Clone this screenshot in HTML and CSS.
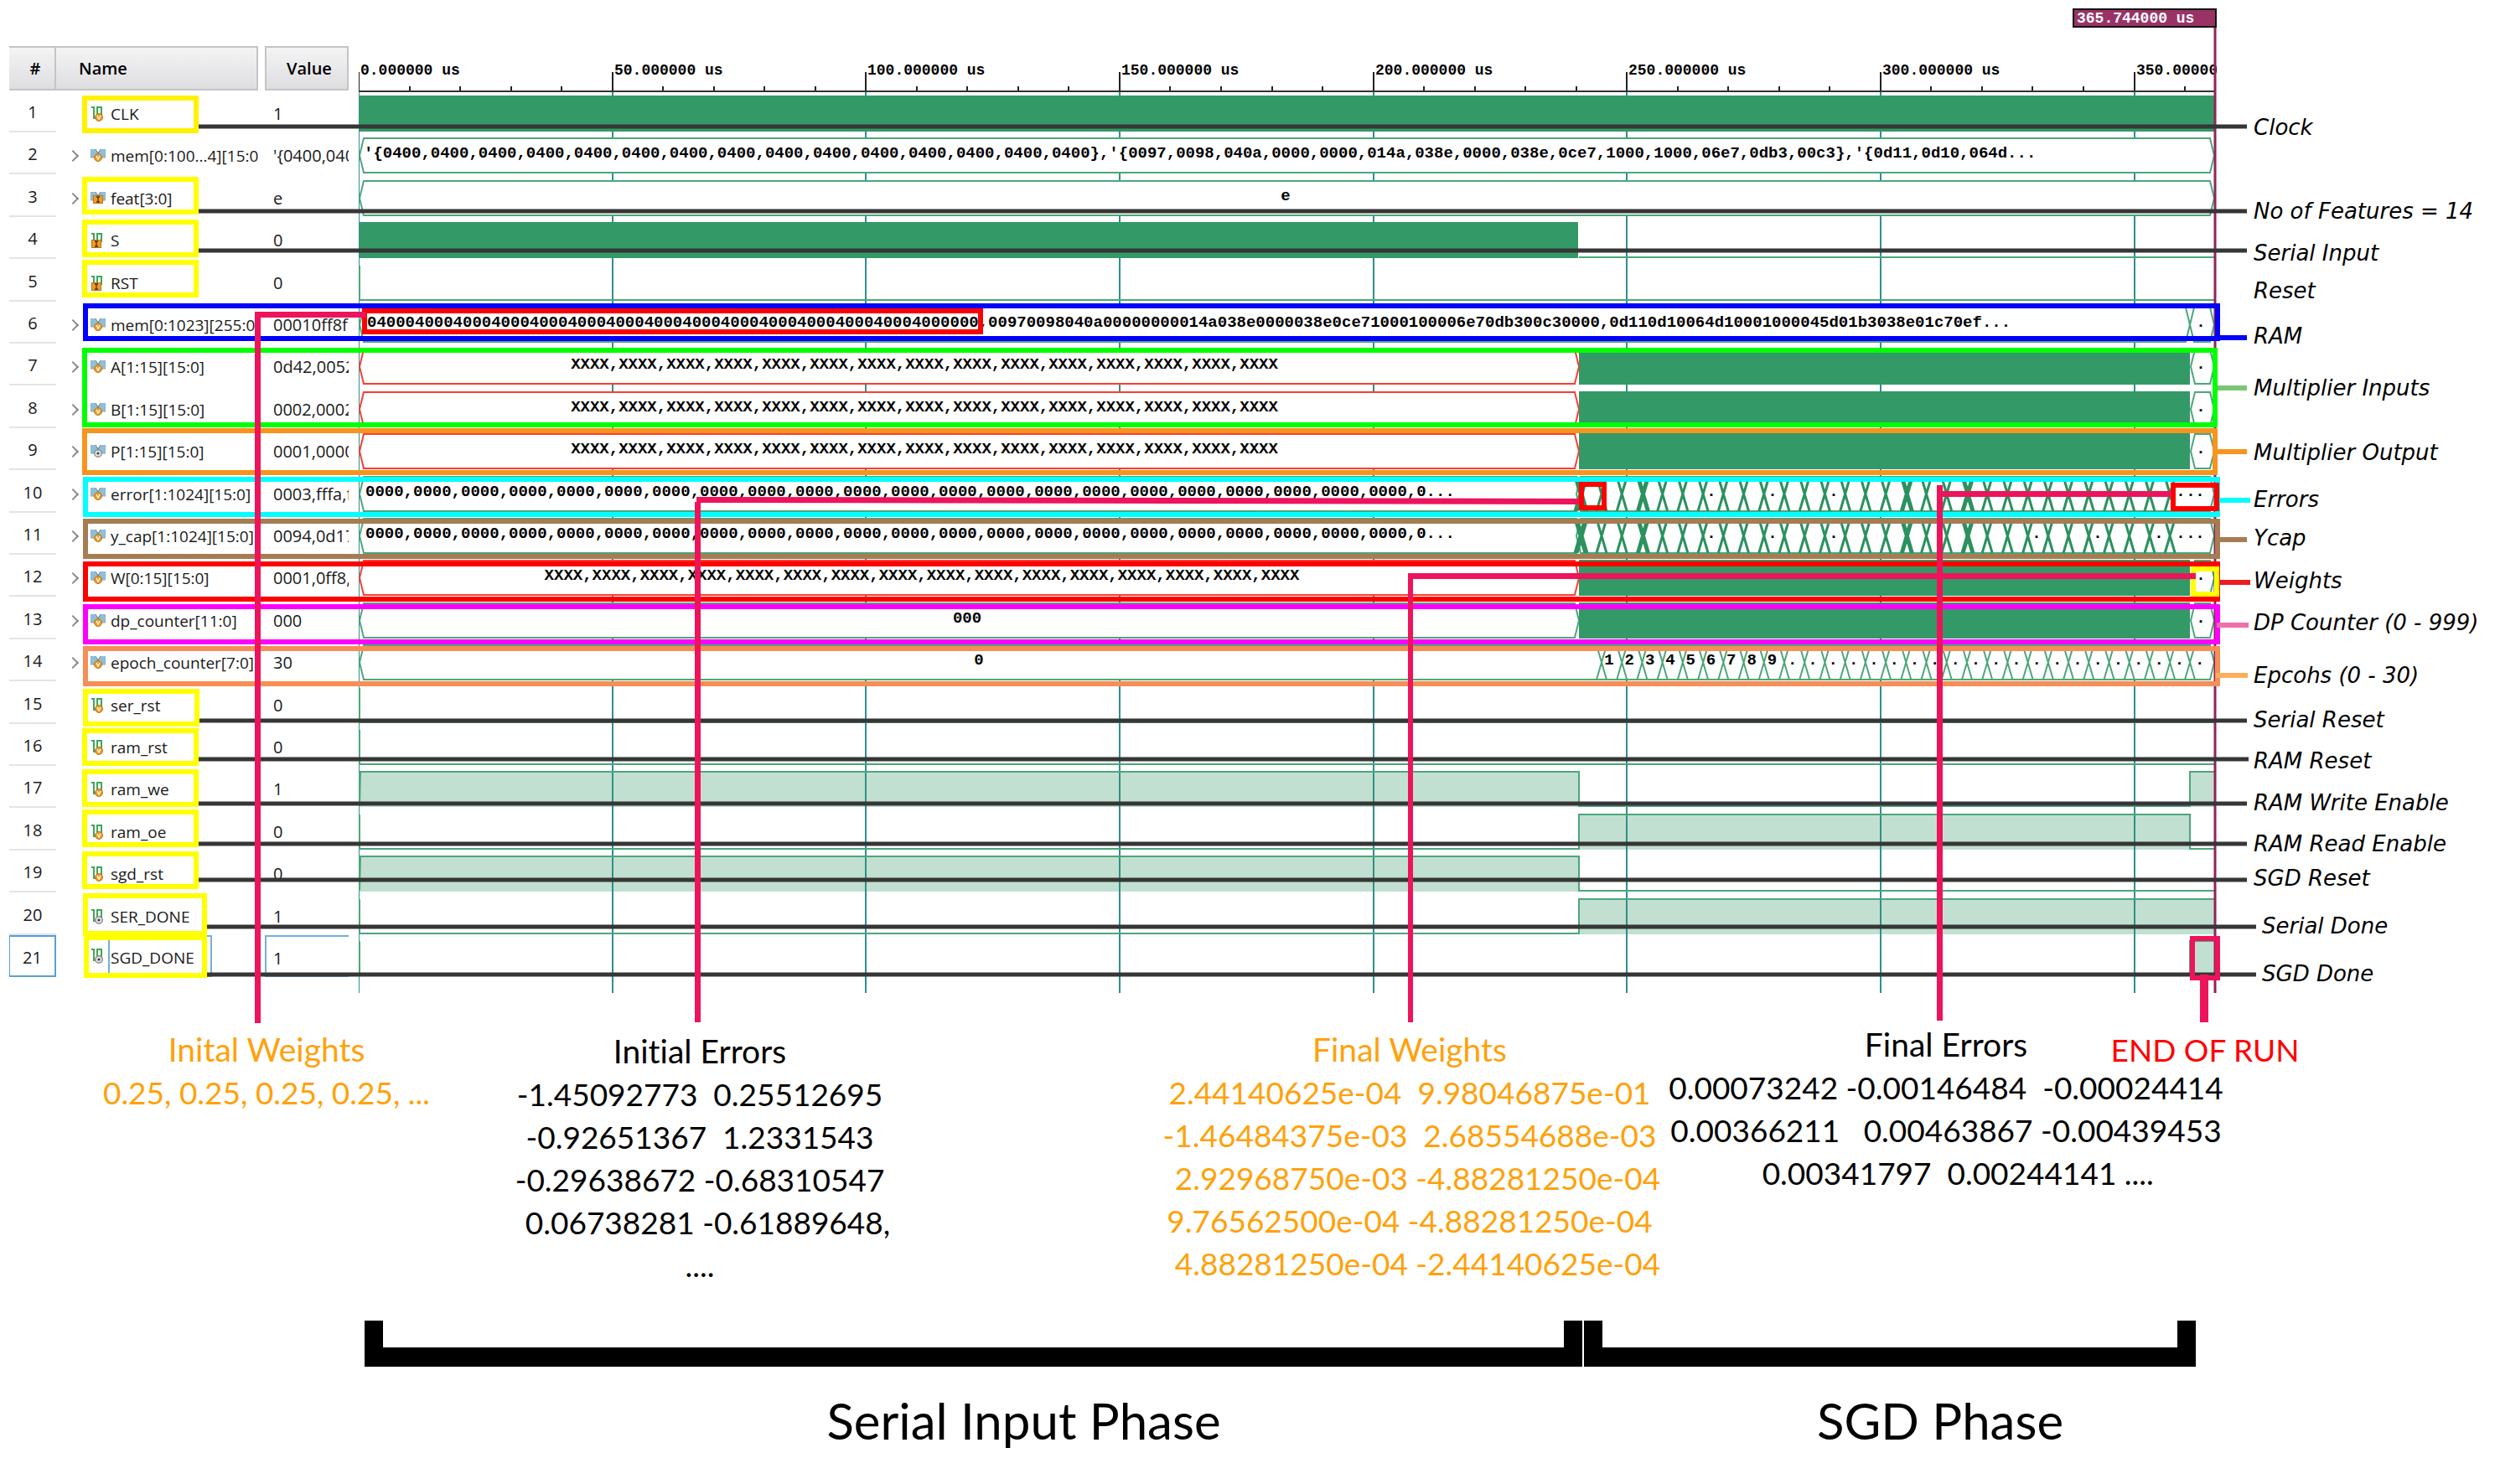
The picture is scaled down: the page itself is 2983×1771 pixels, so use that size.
FILE: index.html
```html
<!DOCTYPE html>
<html lang="en">
<head>
<meta charset="utf-8">
<title>SGD simulation waveform</title>
<link rel="stylesheet" href="styles.css">
</head>
<body>
<svg class="sprite" aria-hidden="true">
  <symbol id="wire" viewBox="0 0 18 18"><path d="M1 1H4V14H8V1H13V11" fill="none" stroke="#3fa657" stroke-width="2"/></symbol>
  <symbol id="bus" viewBox="0 0 18 18"><path d="M0 1H6L8 4H10L12 1H18V11H14L12 13H6L4 11H0Z" fill="#8fbfd8"/><path d="M0 1V11H4M18 1V11H14" fill="none" stroke="#8fa6b2"/><path d="M6 1L9 6L12 1" fill="none" stroke="#6f8390"/></symbol>
  <symbol id="var" viewBox="0 0 10 10"><circle cx="5" cy="5" r="4.5" fill="#f39a24" stroke="#b8741c"/><path d="M3 3L5 7L7 3" fill="none" stroke="#fff" stroke-width="1.3"/></symbol>
  <symbol id="inp" viewBox="0 0 12 10"><rect x=".5" y=".5" width="11" height="9" fill="#f39a24" stroke="#b8741c"/><path d="M4 2H8M6 2V8M4 8H8" fill="none" stroke="#4a3000" stroke-width="1.3"/></symbol>
  <symbol id="out" viewBox="0 0 10 10"><circle cx="5" cy="5" r="4.3" fill="#e3e3e3" stroke="#8c8c8c" stroke-width="1.4"/><circle cx="5" cy="5" r="1.6" fill="#444"/></symbol>
  <symbol id="wire-var" viewBox="0 0 18 18"><use href="#wire"/><use href="#var" x="5" y="8" width="10" height="10"/></symbol>
  <symbol id="wire-in" viewBox="0 0 18 18"><use href="#wire"/><use href="#inp" x="1" y="8" width="12" height="10"/></symbol>
  <symbol id="wire-out" viewBox="0 0 18 18"><use href="#wire"/><use href="#out" x="5" y="8" width="10" height="10"/></symbol>
  <symbol id="bus-var" viewBox="0 0 18 18"><use href="#bus"/><use href="#var" x="4" y="6" width="10" height="10"/></symbol>
  <symbol id="bus-in" viewBox="0 0 18 18"><use href="#bus"/><use href="#inp" x="3" y="5" width="12" height="10"/></symbol>
  <symbol id="bus-out" viewBox="0 0 18 18"><use href="#bus"/><use href="#out" x="4" y="6" width="10" height="10"/></symbol>
</svg>

<main>
  <section class="scope">
    <div class="signals">
      <table>
        <colgroup><col class="col-num"><col class="col-name"><col class="col-gap"><col class="col-value"></colgroup>
        <thead>
          <tr><th class="num">#</th><th class="name">Name</th><td></td><th class="value">Value</th></tr>
        </thead>
        <tbody>
          <tr><td class="num">1</td><td class="name"><span><svg><use href="#wire-var"/></svg>CLK</span></td><td></td><td class="value">1</td></tr>
          <tr><td class="num">2</td><td class="name"><span><button aria-label="Expand"></button><svg><use href="#bus-var"/></svg>mem[0:100...4][15:0</span></td><td></td><td class="value">'{0400,040</td></tr>
          <tr><td class="num">3</td><td class="name"><span><button aria-label="Expand"></button><svg><use href="#bus-in"/></svg>feat[3:0]</span></td><td></td><td class="value">e</td></tr>
          <tr><td class="num">4</td><td class="name"><span><svg><use href="#wire-in"/></svg>S</span></td><td></td><td class="value">0</td></tr>
          <tr><td class="num">5</td><td class="name"><span><svg><use href="#wire-in"/></svg>RST</span></td><td></td><td class="value">0</td></tr>
          <tr><td class="num">6</td><td class="name"><span><button aria-label="Expand"></button><svg><use href="#bus-var"/></svg>mem[0:1023][255:0</span></td><td></td><td class="value">00010ff8f</td></tr>
          <tr><td class="num">7</td><td class="name"><span><button aria-label="Expand"></button><svg><use href="#bus-var"/></svg>A[1:15][15:0]</span></td><td></td><td class="value">0d42,0052</td></tr>
          <tr><td class="num">8</td><td class="name"><span><button aria-label="Expand"></button><svg><use href="#bus-var"/></svg>B[1:15][15:0]</span></td><td></td><td class="value">0002,0002</td></tr>
          <tr><td class="num">9</td><td class="name"><span><button aria-label="Expand"></button><svg><use href="#bus-out"/></svg>P[1:15][15:0]</span></td><td></td><td class="value">0001,0000</td></tr>
          <tr><td class="num">10</td><td class="name"><span><button aria-label="Expand"></button><svg><use href="#bus-var"/></svg>error[1:1024][15:0]</span></td><td></td><td class="value">0003,fffa,f</td></tr>
          <tr><td class="num">11</td><td class="name"><span><button aria-label="Expand"></button><svg><use href="#bus-var"/></svg>y_cap[1:1024][15:0]</span></td><td></td><td class="value">0094,0d17</td></tr>
          <tr><td class="num">12</td><td class="name"><span><button aria-label="Expand"></button><svg><use href="#bus-var"/></svg>W[0:15][15:0]</span></td><td></td><td class="value">0001,0ff8,</td></tr>
          <tr><td class="num">13</td><td class="name"><span><button aria-label="Expand"></button><svg><use href="#bus-var"/></svg>dp_counter[11:0]</span></td><td></td><td class="value">000</td></tr>
          <tr><td class="num">14</td><td class="name"><span><button aria-label="Expand"></button><svg><use href="#bus-var"/></svg>epoch_counter[7:0]</span></td><td></td><td class="value">30</td></tr>
          <tr><td class="num">15</td><td class="name"><span><svg><use href="#wire-var"/></svg>ser_rst</span></td><td></td><td class="value">0</td></tr>
          <tr><td class="num">16</td><td class="name"><span><svg><use href="#wire-var"/></svg>ram_rst</span></td><td></td><td class="value">0</td></tr>
          <tr><td class="num">17</td><td class="name"><span><svg><use href="#wire-var"/></svg>ram_we</span></td><td></td><td class="value">1</td></tr>
          <tr><td class="num">18</td><td class="name"><span><svg><use href="#wire-var"/></svg>ram_oe</span></td><td></td><td class="value">0</td></tr>
          <tr><td class="num">19</td><td class="name"><span><svg><use href="#wire-var"/></svg>sgd_rst</span></td><td></td><td class="value">0</td></tr>
          <tr><td class="num">20</td><td class="name"><span><svg><use href="#wire-out"/></svg>SER_DONE</span></td><td></td><td class="value">1</td></tr>
          <tr class="selected"><td class="num">21</td><td class="name"><span><svg><use href="#wire-out"/></svg><b>SGD_DONE</b></span></td><td></td><td class="value">1</td></tr>
        </tbody>
      </table>
    </div>

    <svg class="wave" id="wave" role="img" aria-label="Signal waveforms"></svg>

    <ul class="labels">
      <li>Clock</li>
      <li>No of Features = 14</li>
      <li>Serial Input</li>
      <li>Reset</li>
      <li>RAM</li>
      <li>Multiplier Inputs</li>
      <li>Multiplier Output</li>
      <li>Errors</li>
      <li>Ycap</li>
      <li>Weights</li>
      <li>DP Counter (0 - 999)</li>
      <li>Epcohs (0 - 30)</li>
      <li>Serial Reset</li>
      <li>RAM Reset</li>
      <li>RAM Write Enable</li>
      <li>RAM Read Enable</li>
      <li>SGD Reset</li>
      <li class="inset">Serial Done</li>
      <li class="inset">SGD Done</li>
    </ul>

    <svg class="marks" viewBox="0 0 2983 1221" preserveAspectRatio="none" aria-hidden="true">
      <g stroke="#363636" stroke-width="5">
        <path d="M237 151H2681M237 252H2681M237 299H2681M238 860H2681M237 906H2683M237 959H2681M237 1007H2681M237 1050H2681M247 1106H2692M247 1163H2692"/>
      </g>
      <g fill="none" stroke="#ff0" stroke-width="6">
        <rect x="101" y="117" width="133" height="39" stroke="#fff200"/>
        <rect x="101" y="214" width="133" height="39"/>
        <rect x="101" y="265" width="133" height="39"/>
        <rect x="101" y="313" width="133" height="39"/>
        <rect x="102" y="825" width="133" height="39"/>
        <rect x="101" y="872" width="133" height="39"/>
        <rect x="101" y="921" width="133" height="39"/>
        <rect x="101" y="969" width="133" height="39"/>
        <rect x="101" y="1019" width="133" height="39"/>
        <rect x="102" y="1069" width="142" height="45"/>
        <rect x="103" y="1119" width="141" height="45"/>
      </g>
      <g fill="none" stroke-width="6">
        <rect x="102" y="365" width="2544" height="39" stroke="#00f"/>
        <rect x="101" y="418" width="2542" height="89" stroke="#0f0"/>
        <rect x="101" y="514" width="2542" height="50" stroke="#f7941e"/>
        <rect x="102" y="572" width="2544" height="42" stroke="#0ff"/>
        <rect x="102" y="622" width="2544" height="42" stroke="#a67c52"/>
        <rect x="102" y="673" width="2544" height="42" stroke="#f00"/>
        <rect x="102" y="724" width="2544" height="42" stroke="#f0f"/>
        <rect x="102" y="774" width="2544" height="42" stroke="#f68e56"/>
        <path d="M2646 403H2681" stroke="#00f"/>
        <path d="M2646 463H2681" stroke="#7cc576"/>
        <path d="M2646 539H2681" stroke="#f7941e"/>
        <path d="M2648 597H2685" stroke="#0ff"/>
        <path d="M2648 644H2681" stroke="#a67c52"/>
        <path d="M2647 695H2685" stroke="#ed1c24"/>
        <path d="M2645 746H2683" stroke="#f06eaa"/>
        <path d="M2644 806H2682" stroke="#fbaf5d"/>
        <rect x="435" y="371" width="735" height="25" stroke="#f00"/>
        <rect x="1887" y="578" width="27" height="28" stroke="#f00"/>
        <rect x="2593" y="579" width="52" height="28" stroke="#f00"/>
        <rect x="2617" y="679" width="28" height="30" stroke="#ff0"/>
        <rect x="2616" y="1120" width="30" height="47" stroke="#ed145b"/>
      </g>
      <g fill="#ed145b">
        <path d="M304 372H437V379H311V1221H304Z"/>
        <path d="M831 593L1884 595V602L836 600V1220H829V599H831Z"/>
        <path d="M1680 684H2620V691H1686V1220H1680Z"/>
        <path d="M2311 579H2318V586H2591V593H2318V1218H2311Z"/>
        <path d="M2625 1163H2635V1220H2625Z"/>
      </g>
    </svg>
  </section>

  <section class="notes">
    <div class="note initial-weights"><h2>Inital Weights</h2>
<pre>0.25, 0.25, 0.25, 0.25, ...</pre></div>
    <div class="note initial-errors"><h2>Initial Errors</h2>
<pre>-1.45092773  0.25512695
-0.92651367  1.2331543
-0.29638672 -0.68310547
  0.06738281 -0.61889648,
....</pre></div>
    <div class="note final-weights"><h2>Final Weights</h2>
<pre>2.44140625e-04  9.98046875e-01
-1.46484375e-03  2.68554688e-03
  2.92968750e-03 -4.88281250e-04
9.76562500e-04 -4.88281250e-04
  4.88281250e-04 -2.44140625e-04</pre></div>
    <div class="note final-errors"><h2>Final Errors</h2>
<pre>0.00073242 -0.00146484  -0.00024414
0.00366211   0.00463867 -0.00439453
   0.00341797  0.00244141 ....</pre></div>
    <div class="note end-of-run"><h2>END OF RUN</h2></div>
  </section>

  <section class="phases">
    <div class="phase serial"><div class="bracket"></div><h2>Serial Input Phase</h2></div>
    <div class="phase sgd"><div class="bracket"></div><h2>SGD Phase</h2></div>
  </section>
</main>
<script src="wave.js"></script>
</body>
</html>
```
FILE: styles.css
```css
body {
  margin: 0;
  background: #fff;
  color: #000;
  font-family: "Open Sans", "Noto Sans", sans-serif;
}

.sprite {
  display: none;
}

/* Scope: signal list, waveforms, captions */
.scope {
  position: relative;
  display: grid;
  grid-template-columns: minmax(0, 428fr) minmax(0, 2217fr) minmax(0, 338fr);
  height: 1221px;
}

.signals {
  padding: 55px 12px 0 11px;
}

.signals table {
  width: 100%;
  table-layout: fixed;
  border-collapse: separate;
  border-spacing: 0;
  font-size: 20px;
  line-height: 28px;
  color: #1a1a1a;
}

.col-num { width: 56px; }
.col-gap { width: 8px; }
.col-value { width: 100px; }

.signals th {
  box-sizing: border-box;
  height: 53px;
  padding: 0;
  border: 2px solid #c4c4c6;
  border-left-width: 0;
  background: linear-gradient(#f4f4f5, #dedee1);
  color: #000;
  font-weight: 600;
  text-align: left;
}

.signals thead .num { padding-left: 8px; text-align: center; }
.signals thead .name { padding-left: 27px; }
.signals thead .value { padding-left: 24px; border-left-width: 2px; }

.signals tbody tr { height: 50px; }
.signals tbody tr:nth-child(5n),
.signals tbody tr:nth-child(5n + 3) { height: 51px; }

.signals td {
  box-sizing: border-box;
  padding: 0;
  white-space: nowrap;
  overflow: hidden;
}

.signals tbody .num {
  padding-top: 4px;
  text-align: center;
  border-bottom: 2px solid #e4e4e4;
}

.signals tbody .name span {
  display: flex;
  align-items: center;
  justify-content: flex-start;
  padding: 6px 0 0 41px;
  font-size: 19px;
}

.signals tbody .name svg {
  flex: none;
  width: 18px;
  height: 18px;
  margin-right: 6px;
}

.signals button {
  flex: none;
  width: 10px;
  height: 10px;
  margin: 0 16px 0 -26px;
  padding: 0;
  border: 2px solid #8a8a8a;
  border-width: 2px 2px 0 0;
  background: none;
  transform: rotate(45deg);
}

.signals tbody .value {
  padding: 6px 0 0 10px;
}

.signals .selected .num { border: 2px solid #5a9fd4; border-left-width: 1px; }
.signals .selected .value { border: 2px solid #74b0dc; border-right: 0; padding-left: 8px; }
.signals .selected .name span { padding-top: 0; }
.signals .selected b {
  box-sizing: border-box;
  width: 124px;
  height: 50px;
  margin-left: -3px;
  padding-left: 1px;
  border: 2px solid #74b0dc;
  font-weight: 400;
  line-height: 50px;
}

.wave {
  display: block;
  width: 100%;
  height: 1186px;
  font: bold 19px "Liberation Mono", "Courier New", monospace;
}

.wave .ruler { font-size: 18px; }

.labels {
  display: grid;
  grid-template-rows: 170px 100px 50px 45px 54px 62px 77px 56px 46px 51px 50px 63px 53px 49px 50px 49px 41px 57px 57px;
  align-items: end;
  margin: 0;
  padding: 0 0 0 44px;
  list-style: none;
  font-family: "Comic Sans MS", "DejaVu Sans", sans-serif;
  font-size: 26px;
  font-style: italic;
  line-height: 36px;
  white-space: nowrap;
}

.labels .inset { padding-left: 10px; }

.marks {
  position: absolute;
  left: 0;
  top: 0;
  width: 100%;
  height: 100%;
  pointer-events: none;
}

/* Value notes under the callouts */
.notes {
  display: grid;
  grid-template-columns:
    minmax(0, 636fr) minmax(0, 398fr) minmax(0, 341fr) minmax(0, 614fr)
    minmax(0, 533fr) minmax(0, 133fr) minmax(0, 85fr) minmax(0, 243fr);
  font-family: Lato, "Open Sans", sans-serif;
  font-size: 37px;
  font-variant-ligatures: none;
  line-height: 51px;
}

.note {
  grid-row: 1;
  display: flex;
  flex-direction: column;
  align-items: center;
  padding-top: 6px;
  white-space: nowrap;
}

.note h2,
.note pre {
  margin: 0;
  font-family: inherit;
  font-size: inherit;
  font-weight: 400;
  text-align: center;
}

.note h2 { font-size: 39px; }

.initial-weights { grid-column: 1; color: #ffa10a; }
.initial-errors { grid-column: 2; padding-top: 8px; }
.final-weights { grid-column: 4; color: #ffa10a; }
.final-errors { grid-column: 5 / 7; padding-top: 0; }
.end-of-run { grid-column: 6 / 8; color: #f00; }
.end-of-run h2 { font-size: 37px; }

/* Phase brackets */
.phases {
  display: grid;
  grid-template-columns: minmax(0, 435fr) minmax(0, 1453fr) minmax(0, 2fr) minmax(0, 730fr) minmax(0, 363fr);
  margin-top: 41px;
}

.serial { grid-column: 2; }
.sgd { grid-column: 4; }

.bracket {
  height: 32px;
  border: 22px solid #000;
  border-width: 0 22px 23px;
}

.phase h2 {
  margin: 28px 0 0;
  padding-left: 120px;
  font-family: Lato, "Open Sans", sans-serif;
  font-size: 60px;
  font-weight: 400;
  line-height: 72px;
  text-align: center;
}
```
FILE: wave.js
```js
const LEFT = 428, WIDTH = 2217, END = 2642, SPLIT = 1884, LAST = 2613;
const ROW = 50.4, TOP = 114, BAND = 43, STEP = 24.22;
const GREEN = '#339966', EDGE = '#4ca67a', RED = '#ff3b30';

const rowTop = n => Math.round(TOP + (n - 1) * ROW);
const shapes = [];
const texts = [];

const text = (x, y, s, extra = '') =>
  texts.push(`<text x="${((x - LEFT) / WIDTH * 100).toFixed(3)}%" y="${y}" ${extra}>${s}</text>`);
const mid = 'text-anchor="middle"';

function bus(n, x1, x2, color = EDGE, w = 2) {
  const t = rowTop(n) + 1, b = t + BAND - 2, m = (t + b) / 2;
  shapes.push(`<path d="M${x1} ${m}L${x1 + 5} ${t}H${x2 - 5}L${x2} ${m}L${x2 - 5} ${b}H${x1 + 5}Z" fill="#fff" stroke="${color}" stroke-width="${w}"/>`);
}
function solid(n, x1, x2) {
  shapes.push(`<rect x="${x1}" y="${rowTop(n)}" width="${x2 - x1}" height="${BAND}" fill="${GREEN}"/>`);
}
function level(n, spans) {
  const t = rowTop(n) + 1, b = rowTop(n) + BAND - 1;
  let d = `M${LEFT + 1} ${t}V${b}`;
  for (const [x1, x2, high] of spans) {
    if (high) shapes.push(`<rect x="${x1}" y="${t}" width="${x2 - x1}" height="${BAND - 1}" fill="${GREEN}" fill-opacity=".3"/>`);
    d += `L${x1} ${high ? t : b}H${x2}`;
  }
  shapes.push(`<path d="${d}" fill="none" stroke="${EDGE}" stroke-width="2"/>`);
}

// time grid
let grid = '', ticks = '';
for (let us = 0; us <= 360; us += 10) {
  const x = Math.round(LEFT + us * 6.053);
  ticks += `M${x} ${us % 50 ? 103 : 86}V109`;
  if (us % 50 === 0) {
    grid += `M${x} 110V1185`;
    text(x + 2, 89, `${us}.000000 us`, 'class="ruler"');
  }
}
shapes.push(`<path d="${grid}" stroke="#2f8f8f" stroke-width="2"/>`);

solid(1, LEFT + 1, END);
bus(2, 429, END);
bus(3, 429, END);
solid(4, LEFT + 1, SPLIT - 1);
shapes.push(`<path d="M${SPLIT} ${rowTop(4) + 42}H${END}" stroke="${EDGE}" stroke-width="2"/>`);
level(5, [[429, END, 0]]);
bus(6, 429, LAST);
bus(6, LAST, END);
for (const n of [7, 8, 9, 12, 13]) {
  bus(n, 429, SPLIT, n === 13 ? EDGE : RED);
  solid(n, SPLIT, LAST);
  bus(n, LAST + 1, END);
}

// neighbouring values cross over each other
function crossings(n, xs, color, w) {
  const t = rowTop(n) + 1, b = t + BAND - 2;
  const d = xs.map(x => `M${x - 6} ${t}L${x + 6} ${b}M${x + 6} ${t}L${x - 6} ${b}`).join('');
  shapes.push(`<path d="${d}" fill="none" stroke="${color}" stroke-width="${w}"/>`);
}
const samples = Array.from({ length: 29 }, (_, k) => 1911 + k * STEP);
for (const n of [10, 11]) {
  bus(n, 429, 1886);
  bus(n, 1881, END);
  crossings(n, [1885, 1888, ...samples, samples[2] + 2, samples[15] + 2, samples[18] + 2], '#2b915f', 3);
}
bus(14, 429, END);
crossings(14, [...samples, LAST], EDGE, 2);

level(15, [[429, END, 0]]);
level(16, [[429, END, 0]]);
level(17, [[430, SPLIT, 1], [SPLIT, LAST, 0], [LAST, END, 1]]);
level(18, [[429, SPLIT, 0], [SPLIT, LAST, 1], [LAST, END, 0]]);
level(19, [[430, SPLIT, 1], [SPLIT, END, 0]]);
level(20, [[429, SPLIT, 0], [SPLIT, END, 1]]);
level(21, [[429, LAST, 0], [LAST, END, 1]]);
shapes.push(`<path d="${ticks}" stroke="#222" stroke-width="2"/><path d="M428 109H${END}" stroke="#333" stroke-width="2"/>`);

// bus values
const base = n => rowTop(n) + 24;
const rep = (s, n) => Array(n).fill(s).join(',');
text(434, base(2), `'{${rep('0400', 15)}},'{0097,0098,040a,0000,0000,014a,038e,0000,038e,0ce7,1000,1000,06e7,0db3,00c3},'{0d11,0d10,064d...`);
text(1534, base(3), 'e', mid);
text(438, base(6), '0400'.repeat(15) + '0000,00970098040a00000000014a038e0000038e0ce71000100006e70db300c30000,0d110d10064d10001000045d01b3038e01c70ef...');
for (const n of [7, 8, 9]) text(1103, base(n), rep('XXXX', 15), mid);
for (const n of [10, 11]) text(436, base(n), rep('0000', 22) + ',0...');
text(1100, base(12), rep('XXXX', 16), mid);
text(1154, base(13), '000', mid);
text(1168, base(14), '0', mid);
for (const n of [6, 7, 8, 9, 12, 13]) text(2626, base(n), '.', mid);
for (const n of [10, 11]) {
  for (const x of [2042, 2115, 2188, 2430, 2503, 2576, 2602, 2614, 2625]) text(x, base(n), '.', mid);
}
for (let k = 0; k < 30; k++) text(1920 + k * 24.3, base(14), k < 9 ? k + 1 : '.', mid);

document.getElementById('wave').innerHTML =
  `<svg viewBox="${LEFT} 0 ${WIDTH} 1186" width="100%" height="100%" preserveAspectRatio="none">${shapes.join('')}</svg>` +
  texts.join('') +
  `<svg viewBox="${LEFT} 0 ${WIDTH} 1186" width="100%" height="100%" preserveAspectRatio="none">
    <rect x="2474" y="11" width="170" height="21" fill="#993366" stroke="#111" stroke-width="2"/>
    <path d="M2643 33V1185" stroke="#912456" stroke-width="3"/></svg>
  <text x="${((2478 - LEFT) / WIDTH * 100).toFixed(3)}%" y="27" class="ruler" fill="#fff">365.744000 us</text>`;
```
